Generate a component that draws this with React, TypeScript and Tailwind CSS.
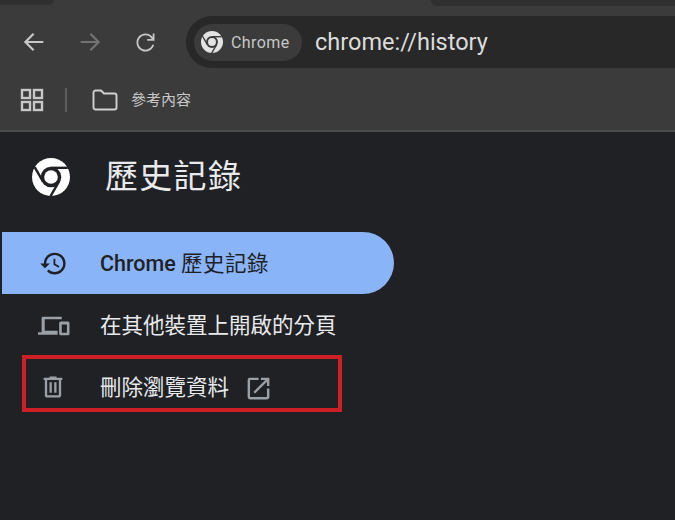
const CJK = "font-['Roboto','Noto_Sans_CJK_TC',sans-serif]";

function ChromeLogo({ size, fill, gap }: { size: number; fill: string; gap: string }) {
  return (
    <svg viewBox="0 0 24 24" width={size} height={size}>
      <circle cx="12" cy="12" r="12" fill={fill} />
      <circle cx="12" cy="12" r="6.500" fill={gap} />
      <circle cx="12" cy="12" r="4.300" fill={fill} />
      <path d="M12 6.200H22.600" stroke={gap} strokeWidth="1.500" />
      <path d="M12 6.200H22.600" stroke={gap} strokeWidth="1.500" transform="rotate(120 12 12)" />
      <path d="M12 6.200H22.600" stroke={gap} strokeWidth="1.500" transform="rotate(240 12 12)" />
    </svg>
  );
}

function Arrow({ flip, className }: { flip?: boolean; className: string }) {
  return (
    <svg viewBox="0 0 24 24" width="28" height="28" fill="currentColor" className={className}>
      <path
        d={flip ? 'M4 11.100h13.200l-5.500-5.500L13 4.300 20.700 12 13 19.700l-1.300-1.300 5.500-5.500H4z' : 'M20 11.100H6.800l5.500-5.500L11 4.300 3.300 12l7.700 7.700 1.300-1.300-5.500-5.500H20z'}
      />
    </svg>
  );
}

function MenuRow({ icon, label, active }: { icon: React.ReactNode; label: React.ReactNode; active?: boolean }) {
  return (
    <div
      className={`flex h-[62px] w-[392px] items-center ml-[2px] ${active ? 'bg-[#8ab4f8] rounded-r-full text-[#202124]' : 'text-[#e8eaed]'}`}
    >
      <div className="flex w-[98px] shrink-0 justify-center pl-[4px]">{icon}</div>
      <div className="pt-[2px]">{label}</div>
    </div>
  );
}

export default function App() {
  return (
    <div className={`relative flex h-[520px] w-[675px] flex-col overflow-hidden bg-[#202124] ${CJK}`}>
      <header className="relative h-[132px] shrink-0 border-b-2 border-[#4c4c4c] bg-[#3b3b3b]">
        <div className="absolute left-0 top-0 h-[5px] w-[54px] rounded-br-lg bg-[#303030]" />
        <div className="absolute right-0 top-0 h-[6px] w-[244px] rounded-bl-lg bg-[#303030]" />

        <div className="flex h-[84px] items-center pl-[20px]">
          <Arrow className="text-[#c7c7c7]" />
          <Arrow flip className="ml-[28px] text-[#737373]" />
          <svg viewBox="0 0 24 24" width="27" height="27" fill="currentColor" className="ml-[28px] text-[#c7c7c7]">
            <path d="M12 20c-2.200 0-4.100-.8-5.700-2.300C4.800 16.100 4 14.200 4 12s.8-4.100 2.300-5.700C7.900 4.800 9.800 4 12 4c1.400 0 2.700.3 3.900 1 1 .6 1.800 1.300 2.500 2.200V4H20v6.500h-6.500V8.900h4c-.5-1-1.300-1.800-2.300-2.400-1-.6-2-.9-3.200-.9-1.800 0-3.300.6-4.500 1.900C6.200 8.700 5.600 10.200 5.600 12s.6 3.300 1.900 4.500c1.200 1.300 2.700 1.900 4.500 1.900 1.400 0 2.600-.4 3.700-1.200 1.100-.8 1.900-1.800 2.300-3.100h1.700c-.5 1.800-1.400 3.200-2.900 4.300-1.400 1.100-3 1.600-4.800 1.600z" />
          </svg>
          <div className="ml-[27px] flex h-[52px] flex-1 items-center rounded-l-full bg-[#282828] pl-[8px]">
            <div className="flex h-[37px] w-[108px] items-center gap-[8px] rounded-full bg-[#3b3b3b] pl-[7px] text-[#c7c7c7]">
              <ChromeLogo size={22} fill="#e3e3e3" gap="#3b3b3b" />
              <span className="pt-[1px] text-[16px] tracking-[0.4px]">Chrome</span>
            </div>
            <span className="ml-[13px] pt-[1px] text-[23.500px] text-[#dcdcdc]">chrome://history</span>
          </div>
        </div>

        <div className="flex h-[32px] items-center pl-[20px]">
          <svg viewBox="0 0 24 24" width="24" height="24" fill="none" stroke="currentColor" strokeWidth="2.400" className="text-[#c7c7c7]">
            <rect x="2" y="2" width="8" height="8" />
            <rect x="14" y="2" width="8" height="8" />
            <rect x="2" y="14" width="8" height="8" />
            <rect x="14" y="14" width="8" height="8" />
          </svg>
          <div className="ml-[21px] h-[24px] w-[2px] bg-[#5e5e5e]" />
          <svg viewBox="0 0 26 24" width="26" height="24" fill="none" stroke="currentColor" strokeWidth="1.900" strokeLinejoin="round" className="ml-[25px] text-[#d0d0d0]">
            <path d="M1.500 4.500a2 2 0 0 1 2-2h5.500l3 3h10.500a2 2 0 0 1 2 2v12a2 2 0 0 1-2 2h-19a2 2 0 0 1-2-2z" />
          </svg>
          <span className="ml-[13px] text-[15px] text-[#c7c7c7]">參考內容</span>
        </div>
      </header>

      <div className="flex h-[90px] items-center pl-[32px]">
        <ChromeLogo size={38} fill="#ffffff" gap="#202124" />
        <h1 className="ml-[35px] text-[33px] font-normal tracking-[1.300px] text-[#e8eaed]">歷史記錄</h1>
      </div>

      <nav className="mt-[10px]">
        <MenuRow
          active
          icon={
            <svg viewBox="0 0 24 24" width="29" height="29" fill="currentColor">
              <path d="M13 3a9 9 0 0 0-9 9H1l3.890 3.890.07.140L9 12H6c0-3.870 3.130-7 7-7s7 3.130 7 7-3.130 7-7 7c-1.930 0-3.680-.790-4.940-2.060l-1.420 1.420A8.954 8.954 0 0 0 13 21a9 9 0 0 0 0-18zm-1 5v5l4.280 2.540.720-1.210-3.500-2.080V8H12z" />
            </svg>
          }
          label={<span className="text-[21.500px] font-medium">Chrome <span className="font-normal tracking-[0.500px]">歷史記錄</span></span>}
        />
        <MenuRow
          icon={
            <svg viewBox="0 0 32 24" width="33" height="25" fill="#9aa0a6">
              <path d="M5 3.500h19v2.500H7.500v11H20v4H1v-2.500h3.500V6A2.500 2.500 0 0 1 5 3.500z" />
              <path fillRule="evenodd" d="M23 8h7a1.500 1.500 0 0 1 1.500 1.500v10.500A1.500 1.500 0 0 1 30 21.500h-7a1.500 1.500 0 0 1-1.500-1.500V9.500A1.500 1.500 0 0 1 23 8zm1 3v8h5v-8z" />
            </svg>
          }
          label={<span className="text-[21.500px]">在其他裝置上開啟的分頁</span>}
        />
        <div className="relative">
          <MenuRow
            icon={
              <svg viewBox="0 0 24 24" width="28" height="28" fill="#9aa0a6">
                <path d="M15 4V3H9v1H4v2h1v13c0 1.100.900 2 2 2h10c1.100 0 2-.900 2-2V6h1V4h-5zm2 15H7V6h10v13zM9 8h2v9H9zm4 0h2v9h-2z" />
              </svg>
            }
            label={
              <div className="flex items-center">
                <span className="text-[21.500px]">刪除瀏覽資料</span>
                <svg viewBox="0 0 24 24" width="29" height="29" fill="#9aa0a6" className="ml-[15px]">
                  <path d="M19 19H5V5h7V3H5a2 2 0 0 0-2 2v14a2 2 0 0 0 2 2h14c1.100 0 2-.900 2-2v-7h-2v7zM14 3v2h3.590l-9.830 9.830 1.410 1.410L19 6.410V10h2V3h-7z" />
                </svg>
              </div>
            }
          />
          <div className="absolute left-[22px] top-[-1px] h-[57px] w-[320px] border-[4px] border-[#cf1f26]" />
        </div>
      </nav>
    </div>
  );
}
